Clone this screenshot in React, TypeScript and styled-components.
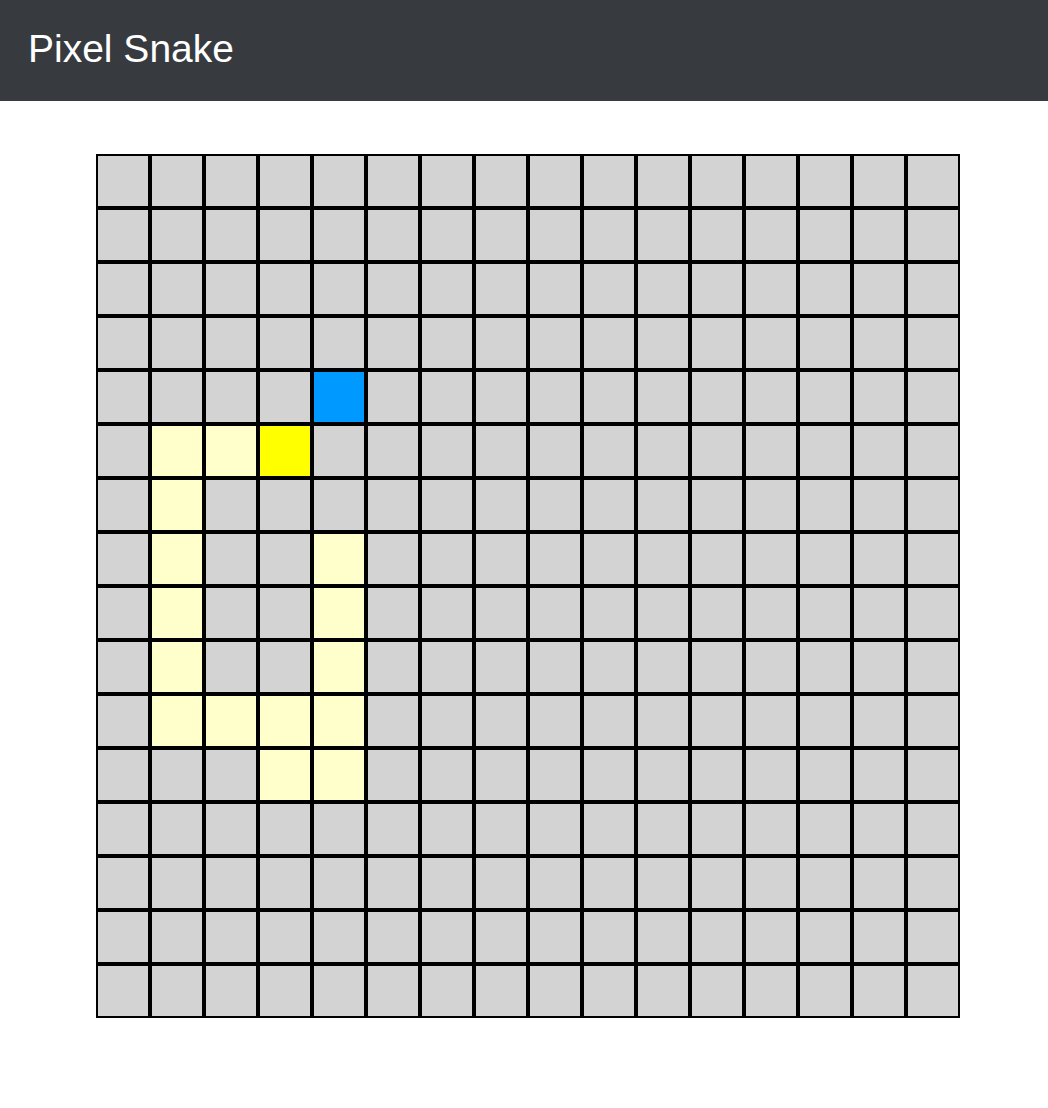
import styled, { createGlobalStyle } from "styled-components";

const GlobalStyle = createGlobalStyle`
  body {
    margin: 0;
    background: #ffffff;
    font-family: "Liberation Sans", Arial, sans-serif;
  }
`;

const Header = styled.header`
  height: 101px;
  background-color: #373a3e;
  display: flex;
  align-items: center;
  padding: 0 28px;
  box-sizing: border-box;
`;

const Title = styled.h1`
  margin: 0;
  color: #ffffff;
  font-size: 39px;
  font-weight: normal;
  padding-bottom: 4px;
`;

const Main = styled.main`
  padding: 53px 0 0 96px;
`;

const Board = styled.div`
  display: grid;
  grid-template-columns: repeat(16, 54px);
  grid-template-rows: repeat(16, 54px);
  width: 864px;
`;

type CellKind = "empty" | "body" | "head" | "food";

const cellColors: Record<CellKind, string> = {
  empty: "#d3d3d3",
  body: "#ffffcc",
  head: "#ffff00",
  food: "#0099ff",
};

const Cell = styled.div<{ $kind: CellKind }>`
  box-sizing: border-box;
  border: 2px solid #000000;
  background-color: ${(p) => cellColors[p.$kind]};
`;

const SIZE = 16;
const food = [4, 4];
const snake = [
  [3, 5],
  [2, 5],
  [1, 5],
  [1, 6],
  [1, 7],
  [1, 8],
  [1, 9],
  [1, 10],
  [2, 10],
  [3, 10],
  [4, 10],
  [4, 9],
  [4, 8],
  [4, 7],
  [3, 11],
  [4, 11],
];

const kindAt = (col: number, row: number): CellKind => {
  if (food[0] === col && food[1] === row) return "food";
  const idx = snake.findIndex(([c, r]) => c === col && r === row);
  if (idx === 0) return "head";
  if (idx > 0) return "body";
  return "empty";
};

const App = () => {
  const cells = [];
  for (let row = 0; row < SIZE; row++) {
    for (let col = 0; col < SIZE; col++) {
      cells.push(<Cell key={`${row}-${col}`} $kind={kindAt(col, row)} />);
    }
  }
  return (
    <>
      <GlobalStyle />
      <Header>
        <Title>Pixel Snake</Title>
      </Header>
      <Main>
        <Board>{cells}</Board>
      </Main>
    </>
  );
};

export default App;
